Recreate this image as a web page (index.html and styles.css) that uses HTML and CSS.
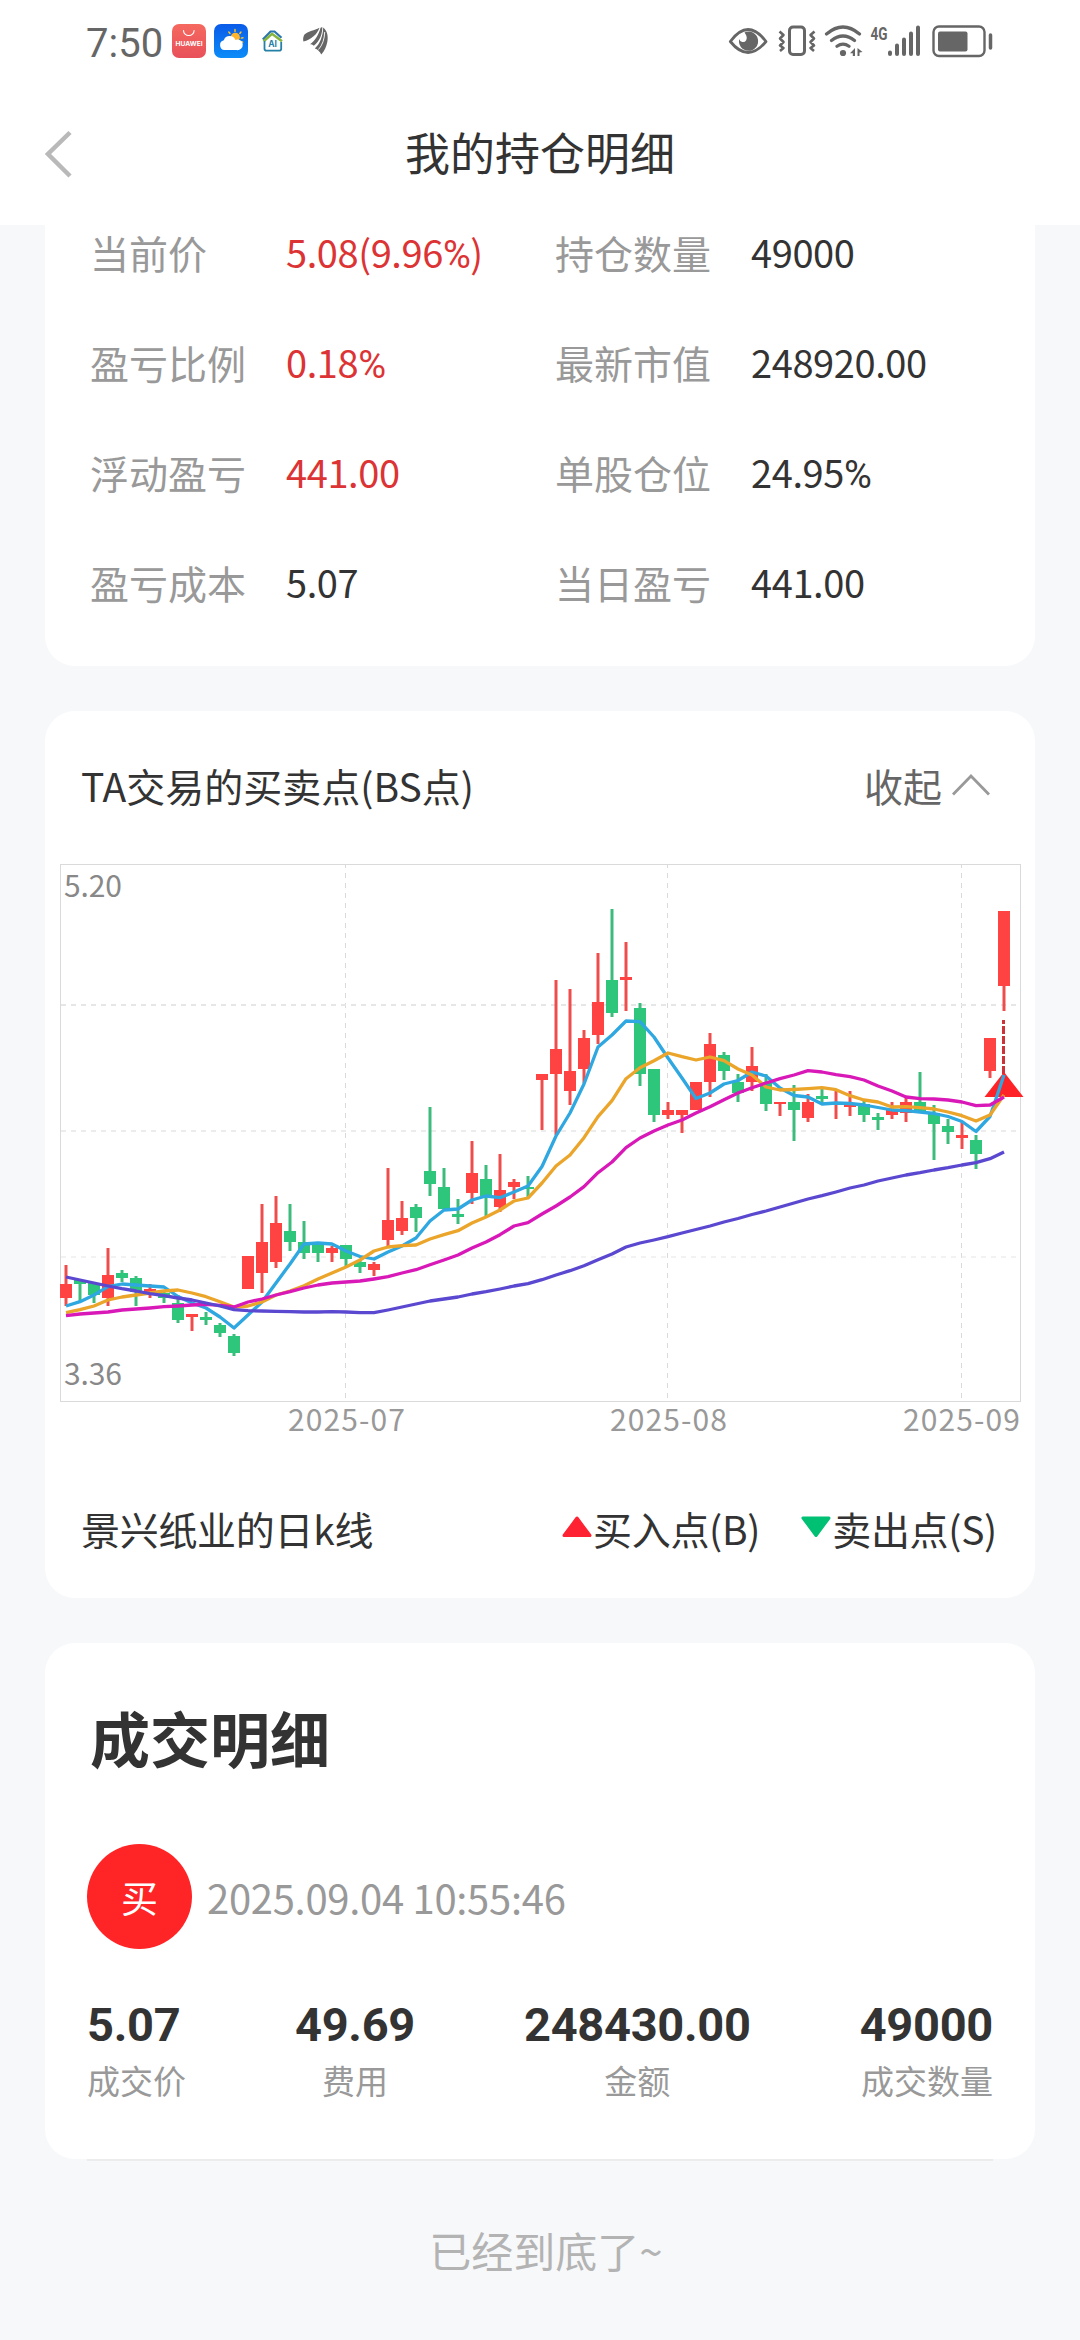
FILE: index.html
```html
<!DOCTYPE html>
<html lang="zh-CN">
<head>
<meta charset="utf-8">
<title>我的持仓明细</title>
<link rel="stylesheet" href="styles.css">
</head>
<body>
<header class="top">
  <div class="status">
    <div class="status-left">
      <span class="clock">7:50</span>
      <svg class="app" width="34" height="34" viewBox="0 0 34 34">
        <defs><linearGradient id="red" x2="0" y2="1"><stop stop-color="#f5695f"/><stop offset="1" stop-color="#e8505a"/></linearGradient></defs>
        <rect width="34" height="34" rx="7" fill="url(#red)"/>
        <path d="M11.5 6.5a5.3 5 0 0 0 10.600 0" fill="none" stroke="#fff" stroke-width="1.100" stroke-linecap="round"/>
        <text class="brand" x="3.600" y="21.700" textLength="27" lengthAdjust="spacingAndGlyphs">HUAWEI</text>
      </svg>
      <svg class="weather" width="34" height="34" viewBox="0 0 34 34">
        <defs><linearGradient id="sky" x2="0" y2="1"><stop stop-color="#0a5be8"/><stop offset="1" stop-color="#0c8cf8"/></linearGradient></defs>
        <rect width="34" height="34" rx="7" fill="url(#sky)"/>
        <path d="M21 5.500v2M14.800 8l1.200 1.500M27 8l-1.200 1.500M29 13.800l-1.800.300M27.500 17.500l1.200.700" stroke="#ffc629" stroke-width="1.400" stroke-linecap="round"/>
        <circle cx="21.300" cy="13.300" r="4.600" fill="#ffb52b"/>
        <path d="M10.500 26a5 5 0 0 1-.7-9.800 6.300 6.300 0 0 1 11.700-.300 5.300 5.300 0 1 1 .9 10.100z" fill="#fff"/>
      </svg>
      <svg class="house" width="24" height="24" viewBox="0 0 24 24">
        <path d="M1.800 10.500 9.500 2.500h4l7 6.300" fill="none" stroke="#2b76b0" stroke-width="2.200"/>
        <path d="M2.600 12.300 11 4.800l10 7.400" fill="none" stroke="#86b53e" stroke-width="2.600"/>
        <path d="M3.500 12v7.700q0 1.900 2 1.900h12.700q2 0 2-1.900V13" fill="none" stroke="#2580a6" stroke-width="1.800"/>
        <text class="ai" x="7.200" y="17.800">AI</text>
      </svg>
      <svg class="feather" width="26" height="29" viewBox="0 0 26 29" fill="#666">
        <path d="M.5 14.500C-.3 12 .3 9.500 1.500 7.500 6 3.500 11 4 16.500.800 14.500 7 8 13 .500 14.500z"/>
        <path d="M7 17.300C11.500 14.500 15.500 8 17.600.800L19.300 0C19.500 7 16.500 14.500 10.800 18.800 9.500 17.500 8.500 17.300 7 17.300z"/>
        <path d="M11.800 21.500C17 17 20 9 20.200.600 24 3.500 25.500 9 24.300 15 23.300 20 21.500 24 18.300 27.500 17 24.500 14.500 22.300 11.800 21.500z"/>
        <path d="M15.500 22.500C19.500 18 21.500 12 21.700 5" fill="none" stroke="#fff" stroke-width=".9"/>
      </svg>
    </div>
    <svg class="status-right" width="268" height="36" viewBox="728 22 268 36" fill="none" stroke="#666">
      <path d="M730.300 40.500Q748 16.500 766 40.500 748 62.500 730.300 40.500z" stroke-width="2.800" stroke-linejoin="round"/>
      <path d="M744.500 31.500a9.600 9.600 0 1 1-5.300 6.500 3.800 3.800 0 0 0 7 1.200q1.600-3.200-1.700-7.700z" fill="#666" stroke="none"/>
      <rect x="789.500" y="26" width="15" height="27.500" rx="3.500" stroke-width="3"/>
      <path d="M779.500 30.500l4 3.500-3.500 3.500 3.500 3.500-3.500 3.500 3.500 2.500-3.500 3M814.500 30.500l-4 3.500 3.500 3.500-3.500 3.500 3.500 3.500-3.500 2.500 3.500 3" stroke-width="2.600" stroke-linejoin="round"/>
      <path d="M826.500 33q16.500-14 33 0M831.500 39.500q11.500-9 23 0M837 45.300q6-4.300 12 0" stroke-width="3.200" stroke-linecap="round"/>
      <circle cx="843" cy="52" r="3.100" fill="#666" stroke="none"/>
      <path d="M855 47v8h-2.200v-2.800h-2.800zM857.500 47l5 4-3 .500v3.500h-2z" fill="#666" stroke="none"/>
      <text class="net" x="870.500" y="38.500" textLength="17" lengthAdjust="spacingAndGlyphs">4G</text>
      <path d="M890 51.500v1.500M897 44.500v8.500M904 38.500v14.500M911 32.500v20.500M918 26.500v26.500" stroke-width="4" stroke-linecap="round"/>
      <rect x="933.500" y="25.500" width="51" height="29.500" rx="5.500" stroke-width="2.400"/>
      <rect x="938" y="30.500" width="29.500" height="20" rx="2" fill="#666" stroke="none"/>
      <path d="M990.500 34v13" stroke-width="3.500" stroke-linecap="round"/>
    </svg>
  </div>
  <nav class="nav">
    <svg class="back" width="28" height="50" viewBox="0 0 28 50"><path d="M25 3.500 3 25 25 47" fill="none" stroke="#b9b9b9" stroke-width="4.500"/></svg>
    <h1>我的持仓明细</h1>
  </nav>
</header>
<main>
  <section class="card holding">
    <dl>
      <dt>当前价</dt><dd class="up">5.08(9.96<i>%</i>)</dd><dt>持仓数量</dt><dd>49000</dd>
      <dt>盈亏比例</dt><dd class="up">0.18<i>%</i></dd><dt>最新市值</dt><dd>248920.00</dd>
      <dt>浮动盈亏</dt><dd class="up">441.00</dd><dt>单股仓位</dt><dd>24.95<i>%</i></dd>
      <dt>盈亏成本</dt><dd>5.07</dd><dt>当日盈亏</dt><dd>441.00</dd>
    </dl>
  </section>

  <section class="card kline">
    <div class="kline-head">
      <h2>TA交易的买卖点(BS点)</h2>
      <span class="fold">收起<svg width="38" height="22" viewBox="0 0 38 22"><path d="M1 20.500 19 2l18 18.500" fill="none" stroke="#999" stroke-width="2.800"/></svg></span>
    </div>
    <svg id="chart" class="chart" width="990" height="592" viewBox="45 855 990 592">
      <g class="frame">
        <rect x="60.500" y="864.500" width="960" height="537"/>
        <path class="v" d="M345.500 865v536M667.500 865v536M961.500 865v536"/>
        <path class="h" d="M61 1005h959"/><path class="h" d="M61 1131h959" opacity=".75"/><path class="h" d="M61 1257h959" opacity=".5"/>
      </g>
      <g id="candles"></g>
      <path d="M1003.500 1020v54" stroke="#cc3237" stroke-width="3" stroke-dasharray="8 2" stroke-dashoffset="4"/>
      <path d="M1004 1072l19.500 25h-39z" fill="#ff2226"/>
      <g id="lines"></g>
      <g class="scale">
        <text x="64" y="897" textLength="58">5.20</text>
        <text x="64" y="1385" textLength="58">3.36</text>
      </g>
      <g class="dates">
        <text x="288" y="1431" textLength="117">2025-07</text>
        <text x="610" y="1431" textLength="117">2025-08</text>
        <text x="903" y="1431" textLength="117">2025-09</text>
      </g>
    </svg>
    <div class="kline-foot">
      <span>景兴纸业的日k线</span>
      <span class="legend">
        <span><svg width="30" height="22" viewBox="0 0 30 22"><path d="M15 2 28 19.500H2z" fill="#ff2233" stroke="#ff2233" stroke-width="3" stroke-linejoin="round"/></svg>买入点(B)</span>
        <span><svg width="30" height="22" viewBox="0 0 30 22"><path d="M2 2h26L15 19.500z" fill="#00c074" stroke="#00c074" stroke-width="3" stroke-linejoin="round"/></svg>卖出点(S)</span>
      </span>
    </div>
  </section>

  <section class="card deal">
    <h2>成交明细</h2>
    <div class="deal-head"><span class="badge">买</span><time>2025.09.04 10:55:46</time></div>
    <div class="figures">
      <div><b>5.07</b><span>成交价</span></div>
      <div><b>49.69</b><span>费用</span></div>
      <div><b>248430.00</b><span>金额</span></div>
      <div><b>49000</b><span>成交数量</span></div>
    </div>
  </section>
  <hr>
  <p class="end">已经到底了<span>~</span></p>
</main>
<script src="chart.js"></script>
</body>
</html>
```
FILE: styles.css
```css
* { box-sizing: border-box; margin: 0; padding: 0; }
body {
  width: 1080px;
  min-height: 2340px;
  background: #f7f8fa;
  color: #333;
  font-family: "Noto Sans CJK SC", sans-serif;
  font-size: 39px;
}
h1, h2 { font-weight: 400; font-size: inherit; }
svg { display: block; flex: none; }

.top { position: relative; z-index: 1; height: 225px; background: #fff; }
.status { height: 82px; padding: 0 84px 0 86px; display: flex; align-items: center; justify-content: space-between; }
.status-left { display: flex; align-items: center; }
.clock { width: 86px; font: 400 40px/48px Roboto, sans-serif; color: #666; padding-top: 5px; }
.weather { margin-left: 8px; }
.house { margin-left: 13px; }
.feather { margin-left: 18px; }
.brand { font: 700 6.500px Inter, sans-serif; fill: #fff; }
.ai { font: 700 8.500px Inter, sans-serif; fill: #2580a6; }
.net { font: 700 18px Roboto, sans-serif; fill: #666; stroke: none; }
.nav { height: 143px; display: grid; grid-template-columns: 99px 1fr 99px; align-items: center; }
.back { margin-left: 45px; }
.nav h1 { margin-top: -3px; text-align: center; font-size: 45px; line-height: 60px; }

.card { width: 990px; margin: 0 auto 45px; background: #fff; border-radius: 30px; }
.holding { margin-top: -28px; padding: 0 45px 29px; }
.holding dl { display: grid; grid-template-columns: 196px 269px 196px 1fr; grid-auto-rows: 110px; line-height: 110px; }
.holding dt { color: #999; }
.holding dd { font-size: 38px; letter-spacing: -.4px; }
.holding dd.up { color: #dc3335; }
.holding i { font: 400 38px/1 Roboto, sans-serif; }

.kline { height: 887px; display: flex; flex-direction: column; }
.kline-head { height: 144px; padding: 4px 45px 0 36px; display: flex; align-items: center; justify-content: space-between; }
.fold { display: flex; align-items: center; gap: 10px; color: #666; }
.frame rect { fill: none; stroke: #dadada; }
.frame path { fill: none; stroke: #dadada; }
.frame .v { stroke-dasharray: 5 5; stroke-dashoffset: 2; }
.frame .h { stroke: #e6e6e6; stroke-width: 2; stroke-dasharray: 5 5; }
.scale, .dates { font-size: 30px; fill: #888; }
.dates { fill: #999; }
.line { fill: none; stroke-width: 3.3; stroke-linejoin: round; }
.kline-foot { height: 62px; margin-top: 50px; padding: 0 38px 0 36px; display: flex; align-items: center; justify-content: space-between; letter-spacing: -.3px; }
.legend { display: flex; gap: 41px; }
.legend span { display: flex; align-items: center; gap: 1px; }
.legend svg { margin-bottom: 2px; }

.deal { height: 516px; margin-bottom: 0; padding: 54px 42px 0; }
.deal h2 { font-size: 60px; font-weight: 700; line-height: 80px; padding-left: 3px; }
.deal-head { margin-top: 67px; display: flex; align-items: center; gap: 15px; color: #999; }
.badge { width: 105px; height: 105px; border-radius: 50%; background: #ff2426; color: #fff; font-size: 37px; line-height: 107px; text-align: center; }
.deal-head time { font-size: 40px; letter-spacing: -.3px; }
.figures { margin-top: 51px; display: flex; justify-content: space-between; text-align: center; }
.figures div:first-child { text-align: left; }
.figures div:last-child { text-align: right; }
.figures b { display: block; font: 700 47px/50px Roboto, sans-serif; letter-spacing: -.3px; }
.figures span { display: block; margin-top: 6px; font-size: 33px; line-height: 48px; color: #999; }
hr { width: 906px; height: 2px; margin: 0 auto; border: 0; background: #ececec; }
.end { margin: 59px 0 0 12px; font-size: 42px; line-height: 60px; text-align: center; color: #b3b3b3; }
```
FILE: chart.js
```js
// Each candle: direction (1 up, 0 down), high, body top, body bottom, low, in chart units.
const candles = [
  [1,1265,1284,1298,1306],[0,1280,1280,1284,1301],[0,1283,1283,1295,1303],[1,1248,1275,1298,1306],
  [0,1270,1273,1278,1282],[0,1276,1278,1292,1306],[1,1284,1289,1292,1298],[0,1290,1293,1298,1303],
  [0,1295,1303,1320,1323],[1,1314,1314,1317,1331],[0,1312,1317,1320,1325],[0,1323,1325,1333,1337],
  [0,1334,1336,1353,1356],[1,1256,1256,1289,1289],[1,1204,1242,1273,1293],[1,1196,1223,1262,1268],
  [0,1204,1231,1242,1251],[0,1221,1242,1253,1259],[0,1242,1242,1253,1262],[1,1246,1248,1253,1262],
  [0,1245,1245,1259,1267],[0,1261,1262,1267,1273],[1,1262,1264,1270,1276],[1,1168,1220,1240,1246],
  [1,1201,1218,1231,1235],[0,1204,1207,1218,1232],[0,1107,1171,1184,1196],[0,1168,1187,1209,1209],
  [0,1199,1214,1217,1224],[1,1141,1173,1193,1204],[0,1165,1179,1197,1216],[1,1154,1190,1207,1212],
  [1,1179,1182,1187,1199],[0,1176,1187,1189,1197],[1,1074,1074,1080,1130],[1,980,1049,1074,1135],
  [1,989,1071,1091,1105],[1,1030,1038,1069,1083],[1,953,1002,1035,1044],[0,909,980,1013,1017],
  [1,942,977,980,1011],[0,1003,1008,1074,1086],[0,1069,1069,1115,1122],[1,1102,1110,1115,1119],
  [1,1110,1110,1115,1133],[1,1082,1082,1110,1110],[1,1033,1044,1082,1097],[0,1052,1055,1071,1080],
  [0,1074,1082,1093,1102],[1,1047,1066,1082,1091],[0,1074,1082,1104,1111],[1,1102,1102,1104,1116],
  [0,1085,1102,1110,1141],[1,1094,1102,1118,1122],[0,1088,1096,1099,1104],[1,1090,1102,1104,1119],
  [1,1091,1105,1107,1116],[0,1101,1104,1115,1122],[0,1113,1117,1120,1130],[1,1102,1110,1115,1119],
  [1,1097,1102,1113,1122],[0,1072,1102,1112,1112],[0,1105,1113,1124,1160],[0,1119,1126,1132,1144],
  [1,1122,1135,1138,1149],[0,1135,1140,1154,1169],[1,1038,1038,1071,1078],[1,911,911,986,1011]
];
const averages = {
  '#2fa7e0': [1306,1301.7,1295,1286.7,1284,1285,1286,1287,1296.5,1303,1308,1317,1328,1315,1302,1283,1264,1244,1243,1244,1251,1256.5,1259,1252,1246,1238,1221,1210,1209,1200,1196,1197.7,1192,1186,1166.5,1136,1113,1084,1047,1035,1021,1021.7,1037,1058,1078,1098.5,1093,1084,1080.5,1072,1076,1088,1095.5,1097,1104,1103,1103.5,1105,1107.5,1110,1110.7,1112,1113.5,1116.5,1121.5,1131.5,1116.5,1075],
  '#eaa52a': [1312.7,1309.7,1306,1300,1297,1295,1293,1291,1290,1293,1296.7,1301.7,1307,1306,1302,1295,1291,1285.7,1279,1273,1267,1260,1251,1247,1245.7,1245,1239,1234.7,1230.7,1223,1217,1210,1201,1198,1183,1166,1155,1137.7,1116.7,1100.7,1078.7,1067.7,1060.7,1053,1056.7,1060,1057,1060.7,1069,1075,1087,1090,1089.5,1088.7,1087.7,1089.7,1095.7,1100,1102,1107,1106.7,1107.7,1109,1112,1115.7,1121,1115,1095],
  '#d918b8': [1315.7,1314,1313,1312,1310,1309,1308,1306.7,1306,1305,1304.3,1305.3,1307,1302,1299,1295,1291.7,1288,1285,1283,1282,1281,1279,1276.7,1273,1269.7,1264.7,1260,1255,1248,1242,1234.7,1226,1222.7,1214,1206,1197,1186.7,1172.7,1162,1147.7,1138,1131,1125,1120,1113,1106.7,1099.7,1093,1087.7,1083,1078.7,1075,1070.7,1072,1074.7,1076.7,1080,1086,1091,1097,1098.7,1099,1100,1102,1105.7,1105,1097],
  '#5b48d0': [1277,1280,1283,1286,1288.7,1291,1293.7,1295.7,1298,1300,1303,1306,1309.7,1310.7,1311,1311.3,1311.7,1312,1312,1311.7,1312,1312.7,1312.7,1310,1307,1304,1301,1299,1297,1294,1291.7,1289,1286,1283.7,1279.7,1275,1270.7,1265.7,1259.7,1254,1247,1243,1240,1236.7,1233,1229.5,1226,1222,1218.5,1214.5,1211,1207,1203,1199,1195.7,1192,1188,1185,1181,1178,1175,1172.7,1170,1167.7,1165,1162.7,1158.7,1152]
};
const x = i => 66 + 14 * i;
document.getElementById('candles').innerHTML = candles.map(([up, hi, top, bottom, lo], i) =>
  `<path d="M${x(i)} ${hi}V${lo}" stroke="${up ? '#ee4d4d' : '#3dbb7b'}" stroke-width="3"/>` +
  `<rect x="${x(i) - 6}" y="${top}" width="12" height="${bottom - top}" fill="${up ? '#ff4242' : '#2ec67b'}"/>`
).join('');
document.getElementById('lines').innerHTML = Object.entries(averages).map(([color, ys]) =>
  `<polyline class="line" stroke="${color}" points="${ys.map((y, i) => x(i) + ',' + y).join(' ')}"/>`
).join('');
```
